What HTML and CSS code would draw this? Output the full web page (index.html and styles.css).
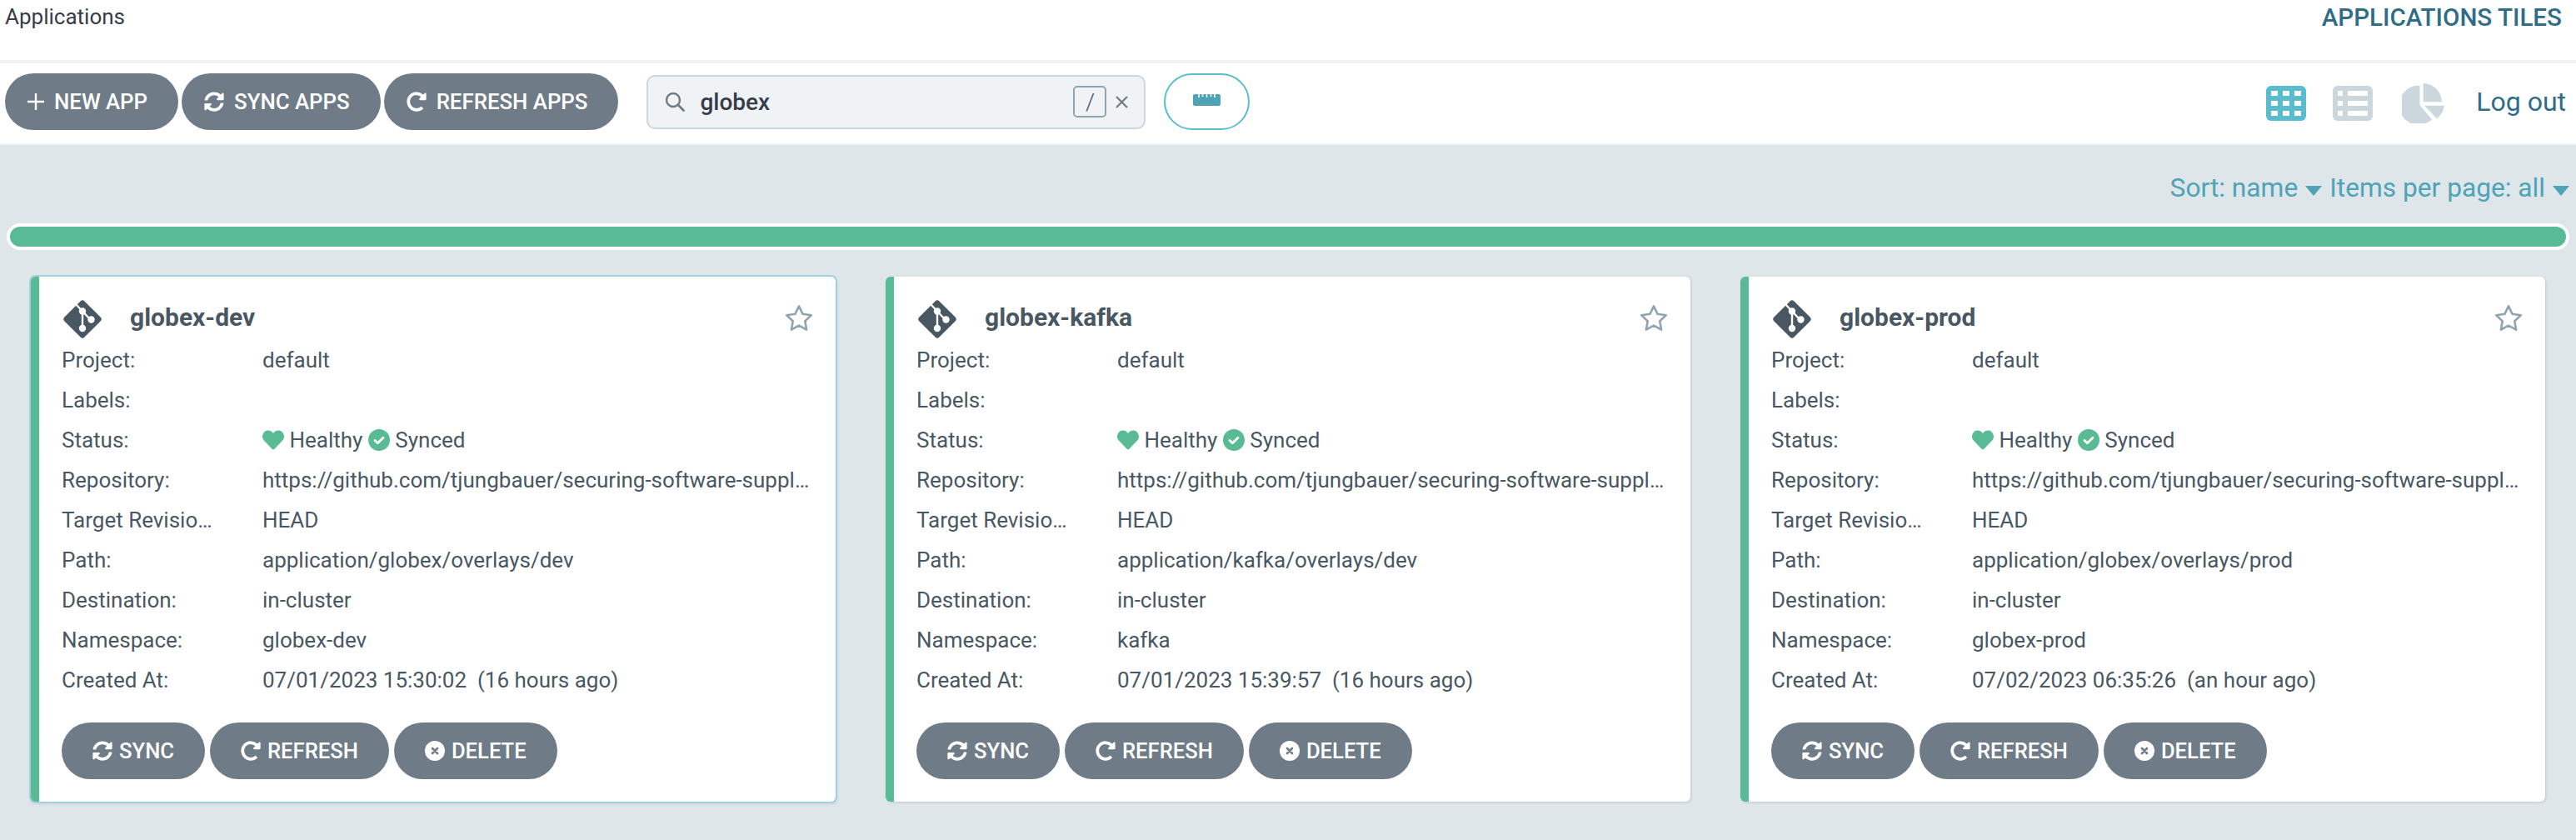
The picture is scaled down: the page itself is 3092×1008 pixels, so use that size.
FILE: index.html
```html
<!DOCTYPE html>
<html>
<head>
  <title>Applications</title>
  <link rel="stylesheet" href="styles.css">
</head>
<body>
  <svg class="sprite" xmlns="http://www.w3.org/2000/svg">
    <defs>
      <symbol id="i-sync" viewBox="0 0 512 512"><path fill="currentColor" d="M370.72 133.28C339.458 104.008 298.888 87.962 255.848 88c-77.458.068-144.328 53.178-162.791 126.85-1.344 5.363-6.122 9.15-11.651 9.15H24.103c-7.498 0-13.194-6.807-11.807-14.176C33.933 94.924 134.813 8 256 8c66.448 0 126.791 26.136 171.315 68.685L463.03 40.97C478.149 25.851 504 36.559 504 57.941V192c0 13.255-10.745 24-24 24H345.941c-21.382 0-32.09-25.851-16.971-40.971l41.75-41.749zM32 296h134.059c21.382 0 32.09 25.851 16.971 40.971l-41.75 41.75c31.262 29.273 71.835 45.319 114.876 45.28 77.418-.07 144.315-53.144 162.787-126.849 1.344-5.363 6.122-9.15 11.651-9.15h57.304c7.498 0 13.194 6.807 11.807 14.176C478.067 417.076 377.187 504 256 504c-66.448 0-126.791-26.136-171.315-68.685L48.97 471.03C33.851 486.149 8 475.441 8 454.059V320c0-13.255 10.745-24 24-24z"/></symbol>
      <symbol id="i-redo" viewBox="0 0 512 512"><path fill="currentColor" d="M256.455 8c66.269.119 126.437 26.233 170.859 68.685l35.715-35.715C478.149 25.851 504 36.559 504 57.941V192c0 13.255-10.745 24-24 24H345.941c-21.382 0-32.09-25.851-16.971-40.971l41.75-41.75c-30.864-28.899-70.801-44.907-113.23-45.273-92.398-.798-170.283 73.977-169.484 169.442C88.764 348.009 162.184 424 256 424c41.127 0 79.997-14.678 110.629-41.556 4.743-4.161 11.906-3.908 16.368.553l39.662 39.662c4.872 4.872 4.631 12.815-.482 17.433C378.202 479.813 319.926 504 256 504 119.034 504 8.001 392.967 8 256.002 7.999 119.193 119.646 7.755 256.455 8z"/></symbol>
      <symbol id="i-times" viewBox="0 0 24 24"><circle cx="12" cy="12" r="12" fill="currentColor"/><path d="M9 9l6 6M15 9l-6 6" stroke="#6f7c87" stroke-width="2.6" stroke-linecap="round"/></symbol>
      <symbol id="i-heart" viewBox="0 0 512 512"><path fill="currentColor" d="M462.3 62.6C407.5 15.9 326 24.3 275.7 76.2L256 96.5l-19.7-20.3C186.1 24.3 104.5 15.9 49.7 62.6c-62.8 53.6-66.1 149.8-9.9 207.9l193.5 199.8c12.5 12.9 32.8 12.9 45.3 0l193.5-199.8c56.3-58.1 53-154.3-9.8-207.9z"/></symbol>
      <symbol id="i-check" viewBox="0 0 26 26"><circle cx="13" cy="13" r="13" fill="currentColor"/><path d="M8 13.6l3.4 3.2 6.6-6.6" fill="none" stroke="#fff" stroke-width="2.8" stroke-linecap="round" stroke-linejoin="round"/></symbol>
      <symbol id="i-git" viewBox="0 0 48 48">
        <rect x="7" y="7" width="34" height="34" rx="3.5" transform="rotate(45 24 24)" fill="currentColor"/>
        <path d="M16 6l8 8.5M24 14.5V37M24 14.5L33 24" fill="none" stroke="#fff" stroke-width="2.4"/>
        <circle cx="24" cy="14.5" r="4.2" fill="#fff"/><circle cx="34.5" cy="24.5" r="4.2" fill="#fff"/><circle cx="24" cy="35" r="4.2" fill="#fff"/>
      </symbol>
      <symbol id="i-star" viewBox="0 0 34 32"><path d="M17 2.4l4.5 9.4 10.2 1.4-7.4 7.2 1.8 10.2-9.1-4.9-9.1 4.9 1.8-10.2-7.4-7.2 10.2-1.4z" fill="none" stroke="currentColor" stroke-width="2.6" stroke-linejoin="round"/></symbol>
    </defs>
  </svg>

  <header class="topbar">
    <div class="crumb">Applications</div>
    <div class="page-title">APPLICATIONS TILES</div>
  </header>

  <div class="toolbar">
    <div class="toolbar-left">
      <button class="btn"><svg class="plus" viewBox="0 0 20 20"><path d="M10 0v20M0 10h20" stroke="currentColor" stroke-width="2.4"/></svg>NEW APP</button>
      <button class="btn"><svg class="ico"><use href="#i-sync"/></svg>SYNC APPS</button>
      <button class="btn btn-last"><svg class="ico"><use href="#i-redo"/></svg>REFRESH APPS</button>
      <div class="search">
        <svg class="search-ico" viewBox="0 0 24 24"><circle cx="10" cy="10" r="8" fill="none" stroke="currentColor" stroke-width="2.4"/><path d="M16 16l6.5 6.5" stroke="currentColor" stroke-width="2.8" stroke-linecap="round"/></svg>
        <span class="search-text">globex</span>
        <span class="kbd">/</span>
        <svg class="search-x" viewBox="0 0 15 15"><path d="M1 1l13 13M14 1L1 14" stroke="currentColor" stroke-width="2.2"/></svg>
      </div>
      <button class="ruler-btn">
        <svg viewBox="0 0 33 14" class="ruler"><rect width="33" height="14" rx="2" fill="currentColor"/><path d="M7 0v4M11.5 0v3M16.5 0v4M21.5 0v3M26 0v4" stroke="#fff" stroke-width="1.6"/></svg>
      </button>
    </div>
    <div class="toolbar-right">
      <svg class="view-ico on" viewBox="0 0 48 42"><rect width="48" height="42" rx="6" fill="currentColor"/><g fill="#fff"><rect x="6" y="6" width="8" height="6"/><rect x="20" y="6" width="8" height="6"/><rect x="34" y="6" width="8" height="6"/><rect x="6" y="18" width="8" height="6"/><rect x="20" y="18" width="8" height="6"/><rect x="34" y="18" width="8" height="6"/><rect x="6" y="30" width="8" height="6"/><rect x="20" y="30" width="8" height="6"/><rect x="34" y="30" width="8" height="6"/></g></svg>
      <svg class="view-ico" viewBox="0 0 48 42"><rect width="48" height="42" rx="6" fill="currentColor"/><g fill="#fff"><rect x="6" y="6" width="6" height="6"/><rect x="18" y="6" width="24" height="6"/><rect x="6" y="18" width="6" height="6"/><rect x="18" y="18" width="24" height="6"/><rect x="6" y="30" width="6" height="6"/><rect x="18" y="30" width="24" height="6"/></g></svg>
      <svg class="pie-ico" viewBox="0 0 51 48"><path fill="currentColor" d="M21.5 2.7V26L36 43.5A23.5 23.5 0 1 1 21.5 2.7zM25.7 0A22 22 0 0 1 47.7 22.3H25.7zM27 26.7H51A24 24 0 0 1 42 42.3z"/></svg>
      <a class="logout">Log out</a>
    </div>
  </div>

  <main class="content">
    <div class="sort-row">
      <span>Sort: name</span><i class="caret"></i>
      <span>Items per page: all</span><i class="caret"></i>
    </div>
    <div class="status-bar"><div class="status-fill"></div></div>

    <div class="cards">
      <article class="card card-hover">
        <div class="card-head">
          <svg class="git"><use href="#i-git"/></svg>
          <span class="card-name">globex-dev</span>
          <svg class="star"><use href="#i-star"/></svg>
        </div>
        <div class="row"><span class="key">Project:</span><span class="val">default</span></div>
        <div class="row"><span class="key">Labels:</span><span class="val"></span></div>
        <div class="row"><span class="key">Status:</span><span class="val"><svg class="st heart"><use href="#i-heart"/></svg> Healthy <svg class="st"><use href="#i-check"/></svg> Synced</span></div>
        <div class="row"><span class="key">Repository:</span><span class="val">https://github.com/tjungbauer/securing-software-supply-chain</span></div>
        <div class="row"><span class="key">Target Revisio…</span><span class="val">HEAD</span></div>
        <div class="row"><span class="key">Path:</span><span class="val">application/globex/overlays/dev</span></div>
        <div class="row"><span class="key">Destination:</span><span class="val">in-cluster</span></div>
        <div class="row"><span class="key">Namespace:</span><span class="val">globex-dev</span></div>
        <div class="row"><span class="key">Created At:</span><span class="val">07/01/2023 15:30:02 &nbsp;(16 hours ago)</span></div>
        <div class="card-actions">
          <button class="btn btn-sm"><svg class="ico"><use href="#i-sync"/></svg>SYNC</button>
          <button class="btn btn-sm"><svg class="ico"><use href="#i-redo"/></svg>REFRESH</button>
          <button class="btn btn-sm"><svg class="ico"><use href="#i-times"/></svg>DELETE</button>
        </div>
      </article>

      <article class="card">
        <div class="card-head">
          <svg class="git"><use href="#i-git"/></svg>
          <span class="card-name">globex-kafka</span>
          <svg class="star"><use href="#i-star"/></svg>
        </div>
        <div class="row"><span class="key">Project:</span><span class="val">default</span></div>
        <div class="row"><span class="key">Labels:</span><span class="val"></span></div>
        <div class="row"><span class="key">Status:</span><span class="val"><svg class="st heart"><use href="#i-heart"/></svg> Healthy <svg class="st"><use href="#i-check"/></svg> Synced</span></div>
        <div class="row"><span class="key">Repository:</span><span class="val">https://github.com/tjungbauer/securing-software-supply-chain</span></div>
        <div class="row"><span class="key">Target Revisio…</span><span class="val">HEAD</span></div>
        <div class="row"><span class="key">Path:</span><span class="val">application/kafka/overlays/dev</span></div>
        <div class="row"><span class="key">Destination:</span><span class="val">in-cluster</span></div>
        <div class="row"><span class="key">Namespace:</span><span class="val">kafka</span></div>
        <div class="row"><span class="key">Created At:</span><span class="val">07/01/2023 15:39:57 &nbsp;(16 hours ago)</span></div>
        <div class="card-actions">
          <button class="btn btn-sm"><svg class="ico"><use href="#i-sync"/></svg>SYNC</button>
          <button class="btn btn-sm"><svg class="ico"><use href="#i-redo"/></svg>REFRESH</button>
          <button class="btn btn-sm"><svg class="ico"><use href="#i-times"/></svg>DELETE</button>
        </div>
      </article>

      <article class="card">
        <div class="card-head">
          <svg class="git"><use href="#i-git"/></svg>
          <span class="card-name">globex-prod</span>
          <svg class="star"><use href="#i-star"/></svg>
        </div>
        <div class="row"><span class="key">Project:</span><span class="val">default</span></div>
        <div class="row"><span class="key">Labels:</span><span class="val"></span></div>
        <div class="row"><span class="key">Status:</span><span class="val"><svg class="st heart"><use href="#i-heart"/></svg> Healthy <svg class="st"><use href="#i-check"/></svg> Synced</span></div>
        <div class="row"><span class="key">Repository:</span><span class="val">https://github.com/tjungbauer/securing-software-supply-chain</span></div>
        <div class="row"><span class="key">Target Revisio…</span><span class="val">HEAD</span></div>
        <div class="row"><span class="key">Path:</span><span class="val">application/globex/overlays/prod</span></div>
        <div class="row"><span class="key">Destination:</span><span class="val">in-cluster</span></div>
        <div class="row"><span class="key">Namespace:</span><span class="val">globex-prod</span></div>
        <div class="row"><span class="key">Created At:</span><span class="val">07/02/2023 06:35:26 &nbsp;(an hour ago)</span></div>
        <div class="card-actions">
          <button class="btn btn-sm"><svg class="ico"><use href="#i-sync"/></svg>SYNC</button>
          <button class="btn btn-sm"><svg class="ico"><use href="#i-redo"/></svg>REFRESH</button>
          <button class="btn btn-sm"><svg class="ico"><use href="#i-times"/></svg>DELETE</button>
        </div>
      </article>
    </div>
  </main>
</body>
</html>
```

FILE: styles.css
```css
* {
  box-sizing: border-box;
}

body {
  margin: 0;
  min-height: 100vh;
  background: #dee6ea;
  font-family: Roboto, sans-serif;
  color: #495763;
}

.sprite {
  position: absolute;
  width: 0;
  height: 0;
}

.topbar {
  height: 76px;
  background: #fff;
  border-bottom: 4px solid #eff3f5;
  display: flex;
  justify-content: space-between;
  align-items: flex-start;
  padding: 0 17px 0 6px;
}

.crumb {
  font-size: 26px;
  line-height: 40px;
  color: #363c4a;
}

.page-title {
  font-size: 29.6px;
  line-height: 42px;
  font-weight: 500;
  color: #2f6c8a;
}

.toolbar {
  height: 98px;
  background: #fff;
  border-bottom: 2px solid #eff3f5;
  display: flex;
  justify-content: space-between;
  align-items: flex-start;
  padding: 12px 12px 0 6px;
}

.toolbar-left,
.toolbar-right {
  display: flex;
  align-items: center;
  height: 68px;
}

.toolbar-right {
  padding-top: 4px;
}

.btn {
  height: 68px;
  border: none;
  border-radius: 34px;
  background: #6f7c87;
  color: #fff;
  font-family: Roboto, sans-serif;
  font-size: 25.8px;
  font-weight: 500;
  display: flex;
  align-items: center;
  padding: 0 37px 0 27px;
  margin-right: 4px;
}

.btn-last {
  margin-right: 34px;
}

.plus {
  width: 20px;
  height: 20px;
  margin-right: 12px;
}

.ico {
  width: 24px;
  height: 24px;
  margin-right: 12px;
}

.search {
  width: 599px;
  height: 65px;
  background: #eff3f5;
  border: 2px solid #ccd6dd;
  border-radius: 10px;
  display: flex;
  align-items: center;
  padding: 0 19px 0 20px;
  margin-right: 22px;
}

.search-ico {
  width: 24px;
  height: 24px;
  color: #6f7c87;
  margin-right: 18px;
}

.search-text {
  flex: 1;
  font-size: 28px;
  font-weight: 500;
  color: #363c4a;
}

.kbd {
  width: 40px;
  height: 38px;
  border: 2px solid #8fa4b1;
  border-radius: 5px;
  display: flex;
  align-items: center;
  justify-content: center;
  font-size: 28px;
  font-weight: 300;
  margin-right: 11px;
}

.search-x {
  width: 15px;
  height: 15px;
  color: #6f7c87;
}

.ruler-btn {
  width: 103px;
  height: 68px;
  background: #fff;
  border: 2px solid #5bbccf;
  border-radius: 34px;
  display: flex;
  align-items: center;
  justify-content: center;
  padding: 0 0 4px;
}

.ruler {
  width: 33px;
  height: 14px;
  color: #4ea4b6;
}

.view-ico {
  width: 48px;
  height: 42px;
  color: #ccd6dd;
  margin-right: 32px;
}

.view-ico.on {
  color: #5bbccf;
}

.view-ico + .pie-ico {
  margin-left: 3px;
}

.pie-ico {
  width: 51px;
  height: 48px;
  color: #ccd6dd;
  margin-right: 38px;
}

.logout {
  font-size: 32px;
  margin-top: -4px;
  color: #2f6c8a;
}

.content {
  padding: 0 8px;
}

.sort-row {
  height: 94px;
  padding: 34px 0 0;
  display: flex;
  justify-content: flex-end;
  align-items: flex-start;
  font-size: 31.7px;
  line-height: 36px;
  color: #4ea4b6;
}

.caret {
  width: 0;
  height: 0;
  margin: 15px 9px 0 9px;
  border-left: 10px solid transparent;
  border-right: 10px solid transparent;
  border-top: 12px solid #4ea4b6;
}

.caret:last-child {
  margin-right: 0;
}

.status-bar {
  height: 32px;
  background: #fff;
  border-radius: 16px;
  padding: 4px;
}

.status-fill {
  height: 24px;
  background: #59bb95;
  border-radius: 12px;
}

.cards {
  display: grid;
  grid-template-columns: repeat(3, 966px);
  gap: 60px;
  padding: 32px 0 0 29px;
}

.card {
  height: 630px;
  background: #fff;
  border-left: 10px solid #59bb95;
  border-radius: 6px;
  box-shadow: 1px 1px 3px rgba(73, 87, 99, 0.2);
  padding: 23px 31px 0 27px;
}

.card-hover {
  box-shadow: 0 0 0 2px #9fd2de, 1px 2px 4px rgba(73, 87, 99, 0.2);
}

.card-head {
  height: 53px;
  display: flex;
  align-items: center;
}

.git {
  width: 48px;
  height: 48px;
  margin: 3px 33px 0 1px;
  color: #495763;
}

.card-name {
  flex: 1;
  font-size: 30px;
  font-weight: 700;
  margin-top: -2px;
}

.star {
  width: 34px;
  height: 32px;
  color: #8fa4b1;
  margin: -2px -4px 0 0;
}

.row {
  display: grid;
  grid-template-columns: 241px 1fr;
  height: 48px;
  font-size: 26px;
  line-height: 48px;
}

.key,
.val {
  white-space: nowrap;
  overflow: hidden;
  text-overflow: ellipsis;
}

.key {
  padding-right: 40px;
}

.st {
  width: 26px;
  height: 26px;
  color: #59bb95;
  vertical-align: -4px;
}

.card-actions {
  display: flex;
  margin: 27px 0 0 0;
}

.btn-sm {
  font-size: 25.6px;
  padding: 0 37px;
  margin-right: 6px;
}

.btn-sm .ico {
  margin-right: 8px;
}
```
